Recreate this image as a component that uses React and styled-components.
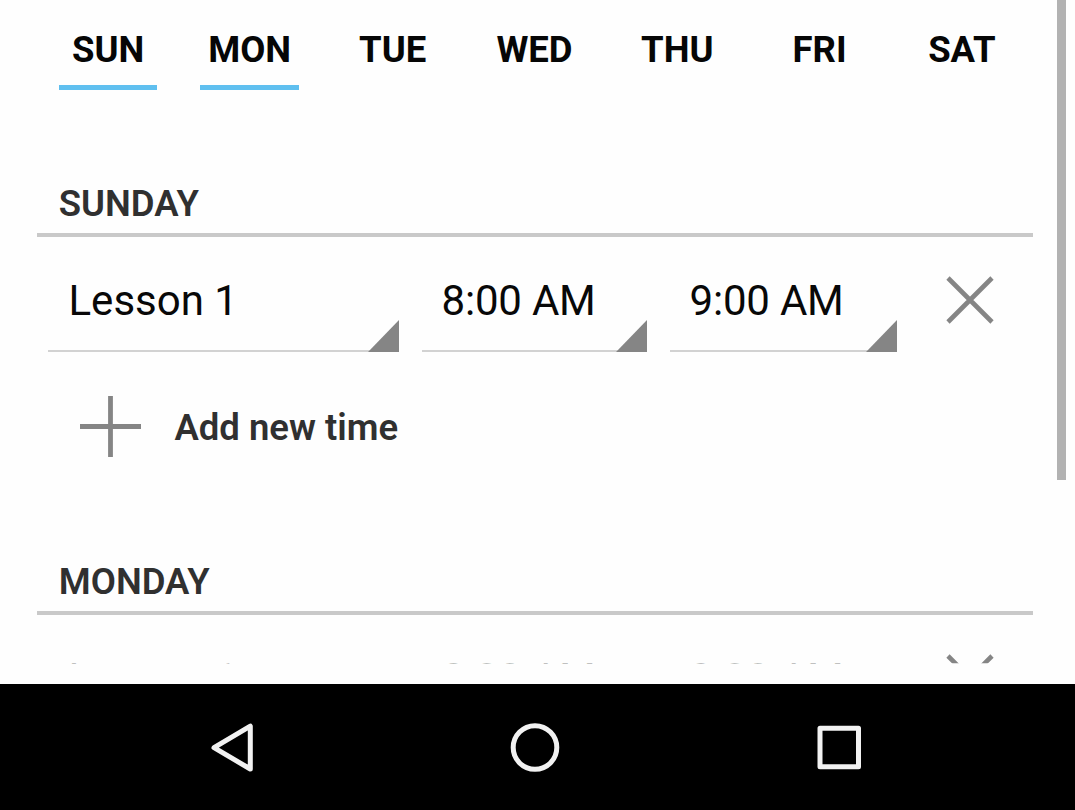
import React from 'react';
import styled, { createGlobalStyle } from 'styled-components';

const GlobalStyle = createGlobalStyle`
  * { box-sizing: border-box; }
  body {
    margin: 0;
    background: #fefefe;
    font-family: Roboto, "Liberation Sans", sans-serif;
    overflow: hidden;
  }
`;

const Screen = styled.div`
  width: 1075px;
  height: 810px;
  display: flex;
  flex-direction: column;
  background: #fefefe;
`;

const Viewport = styled.main`
  height: 684px;
  padding-bottom: 20px;
  display: flex;
  justify-content: space-between;
`;

const Schedule = styled.div`
  width: 996px;
  height: 664px;
  margin-left: 37px;
  overflow: hidden;
  clip-path: inset(0 0 0.75px 0);
`;

const Scrollbar = styled.div`
  width: 9px;
  height: 480px;
  margin-right: 9px;
  background: #b2b2b2;
`;

const DayTabs = styled.nav`
  display: grid;
  grid-template-columns: repeat(7, 1fr);
  justify-items: center;
  height: 178px;
  padding-top: 14px;
`;

const DayTab = styled.button`
  width: ${(p) => p.$width || 98}px;
  height: 76px;
  margin-right: ${(p) => p.$shift || 0}px;
  padding: 0;
  border: 0;
  border-bottom: 5px solid ${(p) => (p.$selected ? '#5fbfef' : 'transparent')};
  background: none;
  display: flex;
  justify-content: center;
  color: #060606;
  font: 700 36.5px/71px Roboto, sans-serif;
`;

const DaySection = styled.section`
  height: 378px;
`;

const DayHeading = styled.h2`
  margin: 0;
  height: 59px;
  padding-left: 21.8px;
  border-bottom: 4px solid #c9c9c9;
  color: #303030;
  font-size: 36.5px;
  font-weight: 600;
  line-height: 51px;
`;

const LessonRow = styled.div`
  display: grid;
  grid-template-columns: 351px 225px 227px 46px;
  column-gap: 23px;
  padding-left: 11px;
  height: 115px;
`;

const Field = styled.div`
  display: flex;
  justify-content: space-between;
  align-items: flex-end;
  padding-left: ${(p) => p.$inset}px;
  border-bottom: 2px solid #d2d2d2;
`;

const FieldText = styled.span`
  height: 113px;
  color: #080808;
  font-size: 42px;
  line-height: 128px;
  letter-spacing: ${(p) => p.$spacing || 0}px;
  white-space: nowrap;
`;

const Corner = styled.span`
  width: 31px;
  height: 32px;
  margin-bottom: -2px;
  background: #858585;
  clip-path: polygon(100% 0, 100% 100%, 0 100%);
`;

const RemoveButton = styled.button`
  width: 48px;
  height: 48px;
  margin: 39px 0 0 26px;
  padding: 0;
  border: 0;
  background: none;
  svg { display: block; }
`;

const AddButton = styled.button`
  display: flex;
  align-items: flex-start;
  gap: 33.4px;
  height: 62px;
  margin: 44px 0 0 43px;
  padding: 0;
  border: 0;
  background: none;
  color: #303030;
  font: 600 36.5px/64px Roboto, sans-serif;
`;

const SystemBar = styled.footer`
  flex: 1;
  background: #000;
  display: grid;
  grid-template-columns: repeat(3, 304px);
  justify-content: center;
  justify-items: center;
  padding: 38px 5px 0 0;
`;

const DAYS = [
  { label: 'SUN', selected: true },
  { label: 'MON', selected: true, width: 99, shift: 1.5 },
  { label: 'TUE' },
  { label: 'WED', shift: 1 },
  { label: 'THU' },
  { label: 'FRI' },
  { label: 'SAT' },
];

function SpinnerField({ inset, spacing, children }) {
  return (
    <Field $inset={inset}>
      <FieldText $spacing={spacing}>{children}</FieldText>
      <Corner />
    </Field>
  );
}

function Lessons({ title }) {
  return (
    <DaySection>
      <DayHeading>{title}</DayHeading>
      <LessonRow>
        <SpinnerField inset={20.5}>Lesson 1</SpinnerField>
        <SpinnerField inset={19.5} spacing={-0.2}>8:00 AM</SpinnerField>
        <SpinnerField inset={19.5} spacing={-0.2}>9:00 AM</SpinnerField>
        <RemoveButton aria-label="Remove">
          <svg width="48" height="48" viewBox="0 0 48 48" stroke="#858585" strokeWidth="4.6">
            <path d="M2 2L46 46M46 2L2 46" />
          </svg>
        </RemoveButton>
      </LessonRow>
      <AddButton>
        <svg width="61" height="61" viewBox="0 0 61 61" stroke="#858585" strokeWidth="4.8">
          <path d="M0 30.5H61M30.5 0V61" />
        </svg>
        Add new time
      </AddButton>
    </DaySection>
  );
}

export default function App() {
  return (
    <>
      <GlobalStyle />
      <Screen>
        <Viewport>
          <Schedule>
            <DayTabs>
              {DAYS.map((d) => (
                <DayTab key={d.label} $selected={d.selected} $width={d.width} $shift={d.shift}>
                  {d.label}
                </DayTab>
              ))}
            </DayTabs>
            <Lessons title="SUNDAY" />
            <Lessons title="MONDAY" />
          </Schedule>
          <Scrollbar />
        </Viewport>
        <SystemBar>
          <svg width="52" height="52" viewBox="0 0 52 52" fill="none" stroke="#f2f2f2" strokeWidth="5" strokeLinejoin="round">
            <path d="M9 25.7L45.3 4.2V47Z" />
          </svg>
          <svg width="52" height="52" viewBox="0 0 52 52" fill="none" stroke="#f2f2f2" strokeWidth="5">
            <circle cx="26" cy="25.5" r="21.8" />
          </svg>
          <svg width="52" height="52" viewBox="0 0 52 52" fill="none" stroke="#f2f2f2" strokeWidth="5" strokeLinejoin="round">
            <rect x="7" y="6.3" width="38.5" height="38.5" />
          </svg>
        </SystemBar>
      </Screen>
    </>
  );
}
